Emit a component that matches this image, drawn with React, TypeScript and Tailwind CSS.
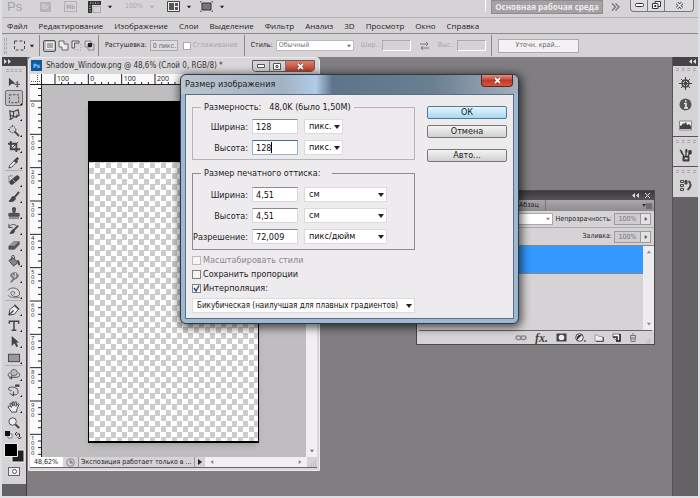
import { useState } from 'react';
import type { ReactNode } from 'react';
import clsx from 'clsx';

const menuItems = [
  'Файл', 'Редактирование', 'Изображение', 'Слои', 'Выделение', 'Фильтр',
  'Анализ', '3D', 'Просмотр', 'Окно', 'Справка',
];

// ── Small shared pieces ──

function Caret({ className }: { className?: string }) {
  return (
    <svg viewBox="0 0 6 4" className={clsx('h-1 w-1.5 shrink-0', className)} fill="currentColor">
      <path d="M0 0h6L3 4z" />
    </svg>
  );
}

function Grip({ className }: { className?: string }) {
  return <div className={clsx('border-y border-dashed border-[#aaa8aa]', className)} />;
}

function Divider() {
  return <div className="w-px self-stretch bg-[#8b898b]" />;
}

// ── Tool icons ──

type Tool = { label: string; icon: ReactNode; flyout?: boolean };

const toolGroups: Tool[][] = [
  [
    { label: 'Перемещение', icon: <><path d="M2 2v9l2.500-2.500L9 8z" fill="#444" stroke="none" /><path d="M11 6v6M8 9h6M10 7l1-1 1 1M10 11l1 1 1-1" /></> },
    { label: 'Прямоугольная область', icon: <rect x="2.500" y="3" width="10" height="8.500" strokeDasharray="2.500 1.500" />, flyout: true },
    { label: 'Лассо', icon: <><path d="M4 12L3 3l3 1 6-2 1 6-4 2" fill="#ccc" strokeWidth="1.300" /><path d="M3 9c2-2 5 0 3 2s-3 0-3 2M7 4v5l3 1 1-3" strokeWidth="1.200" /></>, flyout: true },
    { label: 'Волшебная палочка', icon: <><circle cx="6" cy="6" r="3.500" strokeDasharray="1.500 1" fill="#ccc" /><path d="M6 1v2M1 6h2" /><path d="M8 8l5 5" strokeWidth="2" /></>, flyout: true },
    { label: 'Рамка', icon: <><path d="M4 1v9h10M1 4h9v9" strokeWidth="2" /><path d="M4 10l8-8" /></>, flyout: true },
    { label: 'Пипетка', icon: <><path d="M2 13l1-3 5-5 2 2-5 5z" fill="#eee" /><path d="M8 4l3 3M9 5l3-3" strokeWidth="2.800" /></>, flyout: true },
  ],
  [
    { label: 'Восстанавливающая кисть', icon: <><path d="M5 9l6-5" strokeWidth="5" strokeLinecap="round" /><path d="M6 6l4 4" stroke="#bbb" /><path d="M2 9V2h5" strokeDasharray="1 1" /></>, flyout: true },
    { label: 'Кисть', icon: <><path d="M8 8l5-6" strokeWidth="2" /><path d="M2 12c3-1 2-5 5-5l2 2c0 3-4 4-7 3z" fill="#444" /></>, flyout: true },
    { label: 'Штамп', icon: <path d="M6 2h3v3l-1 3h5v3H2V8h5L6 5zM2 13h11" fill="#555" />, flyout: true },
    { label: 'Архивная кисть', icon: <><path d="M2 6c2-4 6-4 8-2M2 2v4h4" /><path d="M7 9l5-5" strokeWidth="2" /><path d="M3 12c2-1 1-3 4-4l1 2c0 2-3 3-5 2z" fill="#444" /></>, flyout: true },
    { label: 'Ластик', icon: <><path d="M2 9l5-5h6l-5 5z" fill="#999" stroke="#777" /><path d="M2 9h6l5-5v3l-5 5H2z" fill="#555" stroke="#555" /></>, flyout: true },
    { label: 'Заливка', icon: <><path d="M2 7l4-3 6 5-5 4z" fill="#888" /><path d="M5 7V3c0-2 3-2 3 0v3" /><path d="M11 7c2 1 2 3 2 5" strokeWidth="2" /></>, flyout: true },
    { label: 'Палец', icon: <><path d="M4 13l3-4C4 8 3 5 5 4s4-2 6 0 1 4-1 5-3 1-5 4z" fill="#888" stroke="#666" /><path d="M6 5l2 3M9 3v5" stroke="#ddd" /></>, flyout: true },
    { label: 'Губка', icon: <><path d="M1 5c2-4 10-4 12 1s-3 6-6 5-4-5-1-5 3 3 1 3" fill="#ddd" stroke="#555" /><path d="M1 10c3 3 9 3 13 2" stroke="#777" /></>, flyout: true },
  ],
  [
    { label: 'Перо', icon: <><path d="M2 13l1-6 5-4 4 4-4 5z" fill="#eee" /><path d="M2 13l5-5M8 2l5 5" strokeWidth="1.500" /></>, flyout: true },
    { label: 'Текст', icon: <path d="M2.500 5V2.500h10V5M7.500 2.500v9.500M5 12h5" strokeWidth="1.600" />, flyout: true },
    { label: 'Выделение контура', icon: <path d="M5 1v11l3-3 2 4 2-1-2-4h3z" fill="#444" stroke="none" />, flyout: true },
    { label: 'Прямоугольник', icon: <rect x="1.500" y="3.500" width="12" height="8" fill="#999" />, flyout: true },
  ],
  [
    { label: '3D-поворот', icon: <><circle cx="7.500" cy="5" r="3.500" fill="#bbb" stroke="#666" /><path d="M3 5c-3 2-2 5 2 5h5c5 0 4-4 2-5M5 8v4L2 10" /></>, flyout: true },
    { label: '3D-камера', icon: <><path d="M2 4c3-2 10 0 10 4s-3 4-6 3M7 8v5l-4-3M2 4c-1 2 1 4 3 3" /><path d="M9 1h4v1.500H9z" fill="#444" /></>, flyout: true },
    { label: 'Рука', icon: <path d="M5 13L2 9 1 7l2-.500L5 8 3 4l1.500-1L6 6.500V2h1.500v4.500L9 2l1.500.500L9.500 7 12 4l1 .500L11 9l-1 4z" fill="#eee" />, flyout: true },
    { label: 'Масштаб', icon: <><circle cx="6" cy="6" r="4" fill="#eee" /><path d="M9 9l4 4" strokeWidth="2.200" /></> },
  ],
];

function Toolbar() {
  const [active, setActive] = useState('Прямоугольная область');

  return (
    <aside className="flex w-[25px] shrink-0 flex-col border-r border-[#3c3c3c] bg-[#646264]">
      <div className="flex h-[9px] items-center bg-[#464446] pl-0.5">
        <svg viewBox="0 0 8 5" className="h-[5px] w-2" fill="#ddd"><path d="M0 0l3 2.500L0 5zM4 0l3 2.500L4 5z" /></svg>
      </div>
      <div className="flex flex-col items-center bg-[#d6d3d6] pb-2">
        <div className="flex h-2 items-center"><Grip className="h-[3px] w-4" /></div>
        {toolGroups.map((group, i) => (
          <div
            key={i}
            className={clsx(
              'flex flex-col items-center',
              i > 0 && 'border-t border-[#b2b0b2]',
              i === 1 && 'pt-px'
            )}
          >
            {group.map((tool) => (
              <button
                key={tool.label}
                aria-label={tool.label}
                onClick={() => setActive(tool.label)}
                className={clsx(
                  'relative flex h-4 w-[18px] items-center justify-center rounded-xs border',
                  active === tool.label ? 'border-[#6d6d6d] bg-[#c2c0c2]' : 'border-transparent'
                )}
              >
                <svg viewBox="0 0 15 14" className="h-[13px] w-3.5" fill="none" stroke="#444">{tool.icon}</svg>
                {tool.flyout && (
                  <svg viewBox="0 0 3 3" className="absolute right-0 bottom-0 size-[2px]"><path d="M3 0v3H0z" /></svg>
                )}
              </button>
            ))}
          </div>
        ))}
        <div className="mt-px flex w-[18px] items-center justify-between">
          <svg viewBox="0 0 8 8" className="size-2"><path d="M3 3h4v4H3z" fill="#fff" stroke="#777" /><path d="M0 0h5v5H0z" fill="#111" /></svg>
          <svg viewBox="0 0 8 8" className="size-2" fill="none" stroke="#333"><path d="M2 3h2.500v3M2 1L0 3l2 2M2.500 6l2 2 2-2" /></svg>
        </div>
        <svg viewBox="0 0 21 20" className="mt-1 h-5 w-[21px]">
          <path d="M8 7h12v12H8z" fill="#222" stroke="#eee" />
          <path d="M.500.500h13v13H.500z" fill="#000" stroke="#eee" />
        </svg>
        <button aria-label="Быстрая маска" className="mt-1 flex h-[9px] w-3 items-center justify-center border border-[#666] bg-[#eee]">
          <span className="size-[5px] rounded-full border border-[#555] bg-white" />
        </button>
      </div>
    </aside>
  );
}

// ── Top bars ──

function AppBar() {
  return (
    <header className="flex h-[18px] items-center border-b border-[#b3b1b3] pb-1 pl-[5px] text-[7px] text-[#a9a7a9]">
      <span className="w-[33px] font-['Liberation_Sans',sans-serif] text-[13px] leading-[14px] text-[#a3a1a3]">Ps</span>
      <button className="w-[11px] bg-[#b7b5b7] text-center text-[7px] leading-[10px] text-[#e0dee0]">Br</button>
      <button className="ml-[13px] w-[13px] border border-[#b3b1b3] text-center text-[6px] leading-[9px] font-bold">Mb</button>
      <button aria-label="Показать" className="ml-[11px] flex items-center gap-1.5 text-[#222]">
        <svg viewBox="0 0 13 12" className="h-3 w-[13px]">
          <path d="M0 0h13v4H4v8H0z" fill="#333" />
          <path d="M2 2h1M4.500 2h1M7 2h1M9.500 2h1M1.500 5h1M1.500 7.500h1M1.500 10h1" stroke="#eee" />
          <path d="M5 5.500h7.500v6H5z" fill="#d6d3d6" stroke="#aaa" />
        </svg>
        <Caret className="scale-75" />
      </button>
      <button className="ml-3 flex items-center gap-1.5">100%<Caret className="scale-75" /></button>
      <button aria-label="Упорядочить документы" className="ml-3 flex items-center gap-1.5 text-[#222]">
        <svg viewBox="0 0 13 11" className="h-[11px] w-[13px]"><path d="M.500.500h12v10H.500z" fill="#eee" stroke="#444" /><path d="M2 2h5v7H2zM8 2h3v3H8zM8 6h3v3H8z" fill="#555" /></svg>
        <Caret className="scale-75" />
      </button>
      <button aria-label="Режим экрана" className="ml-2 flex items-center gap-1.5 text-[#222]">
        <svg viewBox="0 0 13 11" className="h-[11px] w-[13px]"><path d="M2 2h9v7H2z" fill="#777" stroke="#333" /><path d="M0 2V0h2M11 0h2v2M0 9v2h2M11 11h2V9" fill="none" stroke="#555" /></svg>
        <Caret className="scale-75" />
      </button>
      <div className="ml-auto flex h-[14px] items-start">
        <div className="mr-[5px] h-3 w-px bg-white" />
        <button className="h-[14px] w-28 border border-[#8f8d8f] bg-[#a3a1a3] text-center font-['Open_Sans',sans-serif] text-[8px] leading-[12px] font-bold whitespace-nowrap text-[#eceaec]">
          Основная рабочая среда
        </button>
        <svg viewBox="0 0 9 8" className="mt-[3px] mr-2.5 ml-2 h-2 w-[9px]" fill="none" stroke="#777" strokeWidth="1.300"><path d="M1 .500L4.500 4 1 7.500M4.500.500L8 4 4.500 7.500" /></svg>
        <div className="mr-1 flex h-3 overflow-hidden rounded-b border border-t-0 border-[#77797b] bg-[#dedcde]">
          <button aria-label="Свернуть" className="flex w-[17px] items-center justify-center border-r border-[#77797b]">
            <svg viewBox="0 0 9 4" className="h-1 w-[9px]"><rect x=".500" y=".500" width="8" height="3" rx="1" fill="#fff" stroke="#333" /></svg>
          </button>
          <button aria-label="Восстановить" className="flex w-[17px] items-center justify-center border-r border-[#77797b]">
            <svg viewBox="0 0 9 8" className="h-2 w-[9px]" fill="#fff" stroke="#333"><path d="M3 .500h5.500v5H3z" /><path d="M.500 2.500H6v5H.500z" /><path d="M2.500 4.500H4v1H2.500z" /></svg>
          </button>
          <button aria-label="Закрыть" className="flex w-7 items-center justify-center">
            <svg viewBox="0 0 9 7" className="h-[7px] w-[9px]"><path d="M2 1l5 5M7 1L2 6" stroke="#333" strokeWidth="3" /><path d="M2 1l5 5M7 1L2 6" stroke="#fff" strokeWidth="1.400" /></svg>
          </button>
        </div>
      </div>
    </header>
  );
}

function OptionsBar() {
  return (
    <div className="flex h-6 items-center border-t border-[#8b898b] py-px pl-0.5 text-[7px] text-[#222]">
      <div className="h-4 w-[3px] border-x border-dashed border-[#aaa8aa]" />
      <svg viewBox="0 0 11 11" className="ml-[7px] size-[11px]"><rect x=".500" y="1" width="10" height="9" fill="none" stroke="#444" strokeDasharray="3 2" /></svg>
      <Caret className="mr-1 ml-1 scale-75" />
      <Divider />
      <div className="mx-[3px] flex items-center gap-0.5">
        <button aria-label="Новая область" className="flex h-3 w-[13px] items-center justify-center rounded-xs border border-[#555] bg-[#bbb]">
          <span className="h-[7px] w-2 border border-[#eee] bg-[#aaa]" />
        </button>
        <button aria-label="Добавить к области"><svg viewBox="0 0 11 11" className="size-[11px]"><path d="M1 1h5v3h4v6H4V7H1z" fill="#eee" stroke="#666" /></svg></button>
        <button aria-label="Вычесть из области"><svg viewBox="0 0 11 11" className="size-[11px]" fill="none" stroke="#555"><path d="M1 8V1h7v2H3.500v5z" fill="#eee" /><path d="M4 4h6v6H4z" strokeDasharray="1 2" stroke="#999" /></svg></button>
        <button aria-label="Пересечение"><svg viewBox="0 0 11 11" className="size-[11px]"><path d="M1 1h6v6H1zM4 4h6v6H4z" fill="none" stroke="#888" /><path d="M4 3h4v4H4z" fill="#222" /></svg></button>
      </div>
      <Divider />
      <label htmlFor="feather" className="ml-1.5">Растушевка:</label>
      <input id="feather" defaultValue="0 пикс." className="ml-[3px] h-[11px] w-7 border border-[#aaa] bg-[#dedcde] pl-0.5 text-[7px] text-[#666]" />
      <label className="mr-1.5 ml-[5px] flex items-center gap-0.5 text-[#a9a7a9]">
        <input type="checkbox" disabled className="size-2 appearance-none border border-[#aaa] bg-white" />
        Сглаживание
      </label>
      <Divider />
      <label htmlFor="style" className="ml-1.5">Стиль:</label>
      <div className="relative ml-[3px] w-[78px] text-[#777]">
        <select id="style" className="block h-[11px] w-full appearance-none border border-[#bbb] bg-white pl-0.5 text-[7px] leading-[9px]">
          <option>Обычный</option>
        </select>
        <Caret className="pointer-events-none absolute top-1 right-0.5 scale-75" />
      </div>
      <label htmlFor="opt-w" className="ml-[7px] text-[#a9a7a9]">Шир.:</label>
      <input id="opt-w" disabled className="ml-0.5 h-[11px] w-[29px] border border-[#aaa] border-r-white border-b-white bg-[#d6d3d6]" />
      <svg viewBox="0 0 9 8" className="mx-[9px] h-2 w-[9px]" fill="none" stroke="#777"><path d="M0 2h8M6 0l2 2-2 2M9 6H1M3 4L1 6l2 2" /></svg>
      <label htmlFor="opt-h" className="text-[#a9a7a9]">Выс.:</label>
      <input id="opt-h" disabled className="mr-[5px] ml-0.5 h-[11px] w-[29px] border border-[#aaa] border-r-white border-b-white bg-[#d6d3d6]" />
      <Divider />
      <button className="ml-1.5 h-[14px] w-[81px] border border-[#aaa] bg-[#f3f1f3] text-[7px] leading-none text-[#666]">Уточн. край...</button>
    </div>
  );
}

// ── Document window ──

const hTicks = [-100, 0, 100, 200, 300, 400, 500, 600];
const vTicks = [0, 100, 200, 300, 400, 500, 600, 700, 800, 900, 1000];

function HorizontalRuler() {
  return (
    <svg className="h-[11px] min-w-0 flex-1 bg-[#fafafa]" fill="#222" fontSize="7" fontFamily="Open Sans, sans-serif">
      {hTicks.map((t, i) => {
        const x = 13 + (i * 100) / 3;
        return (
          <g key={t}>
            <path d={`M${x} 0v11M${x + 6.7} 8v3M${x + 13.3} 8v3M${x + 20} 8v3M${x + 26.7} 8v3`} stroke="#222" />
            <text x={x + 2} y="7">{Math.abs(t)}</text>
          </g>
        );
      })}
      <path d="M0 10.500h290" stroke="#222" />
    </svg>
  );
}

function VerticalRuler() {
  return (
    <svg className="h-full w-3 shrink-0 bg-[#fafafa]" fill="#222" fontSize="6" fontFamily="Open Sans, sans-serif">
      <path d="M8 3.500h3M8 10.500h3" stroke="#222" />
      {vTicks.map((t, i) => {
        const y = 16 + (i * 100) / 3;
        return (
          <g key={t}>
            <path d={`M0 ${y}h11M8 ${y + 6.7}h3M8 ${y + 13.3}h3M8 ${y + 20}h3M8 ${y + 26.7}h3`} stroke="#222" />
            {String(t).split('').map((d, n) => (
              <text key={n} x="1" y={y + 6 + n * 5}>{d}</text>
            ))}
          </g>
        );
      })}
      <path d="M11.500 0v400" stroke="#222" />
    </svg>
  );
}

function DocumentWindow() {
  return (
    <section className="absolute top-0 left-[26px] flex h-[414px] w-[292px] flex-col rounded-t border border-[#eceaec] bg-[#d9d7d9] pr-0.5 pb-0.5 pl-px">
      <div className="flex h-4 items-start text-[#333]">
        <span className="mt-0.5 mr-1 ml-px flex h-[11px] w-[11px] items-center justify-center bg-[#0e5a9c] text-[6px] font-bold text-[#8fd3ff]">Ps</span>
        <h1 className="text-[8px] leading-[15px] whitespace-nowrap">Shadow_Window.png @ 48,6% (Слой 0, RGB/8) *</h1>
        <div className="mt-0.5 mr-0.5 ml-auto flex h-3 w-[63px] overflow-hidden rounded-b border border-[#665c5c]">
          <button aria-label="Свернуть" className="flex flex-1 items-center justify-center border-r border-[#777] bg-[#d4d2d4]">
            <svg viewBox="0 0 8 4" className="h-1 w-2"><path d="M.500.500h7v3h-7z" fill="#fff" stroke="#555" /></svg>
          </button>
          <button aria-label="Развернуть" className="flex flex-1 items-center justify-center border-r border-[#777] bg-[#d4d2d4]">
            <svg viewBox="0 0 8 7" className="h-[7px] w-2"><path d="M.500.500h7v6h-7z" fill="#fff" stroke="#555" /><path d="M3 2.500h2v2H3z" fill="none" stroke="#555" /></svg>
          </button>
          <button aria-label="Закрыть документ" className="flex w-7 items-center justify-center bg-linear-to-b from-[#dc8070] to-[#bf3a22]">
            <svg viewBox="0 0 9 7" className="h-[7px] w-[9px]"><path d="M2 1l5 5M7 1L2 6" stroke="#7a3a30" strokeWidth="3" /><path d="M2 1l5 5M7 1L2 6" stroke="#fff" strokeWidth="1.800" /></svg>
          </button>
        </div>
      </div>
      <div className="flex">
        <div className="flex h-[11px] w-3 items-center justify-center border-r border-b border-[#222] bg-[#fafafa]">
          <svg viewBox="0 0 9 9" className="size-[9px]"><path d="M6.500 0v9M0 6.500h9" stroke="#555" strokeDasharray="1 1" /></svg>
        </div>
        <HorizontalRuler />
      </div>
      <div className="flex min-h-0 flex-1">
        <VerticalRuler />
        <div className="min-w-0 flex-1 bg-[#bfbdbf] pt-4 pl-[46px]">
          <div className="h-[342px] w-[171px] border border-b-2 border-black bg-[conic-gradient(#fff_25%,#ccc_0_50%,#fff_0_75%,#ccc_0)] bg-size-[11px_11px] shadow-md">
            <div className="h-[60px] bg-black" />
          </div>
        </div>
        <div className="flex w-[11px] shrink-0 flex-col items-center justify-end bg-[#f1eff1] pb-1 text-[#777]"><Caret className="scale-75" /></div>
      </div>
      <footer className="flex h-[11px] shrink-0 items-center border-b border-[#666] bg-[#d6d3d6] text-[7px] leading-none text-[#222]">
        <span className="flex h-full w-[33px] items-center bg-white pl-1">48,62%</span>
        <svg viewBox="0 0 9 9" className="mx-[3px] size-[9px]" fill="none" stroke="#888"><circle cx="4.500" cy="4.500" r="3.800" /><path d="M4 2l3 3H4z" fill="#888" /></svg>
        <span className="flex h-full flex-1 items-center border-x border-[#999] pl-0.5 whitespace-nowrap">Экспозиция работает только в ...</span>
        <button aria-label="Сведения" className="flex w-[9px] justify-center"><Caret className="-rotate-90" /></button>
        <div className="ml-px flex h-full w-[102px] items-center justify-between bg-[#f1eff1] px-1 text-[#888]">
          <Caret className="scale-75 rotate-90" /><Caret className="scale-75 -rotate-90" />
        </div>
        <svg viewBox="0 0 10 10" className="size-2.5" stroke="#aaa" strokeDasharray="1 1"><path d="M2 9h7M4 7h5M6 5h3M8 3h1" /></svg>
      </footer>
    </section>
  );
}

// ── Layers panel ──

function LayersPanel() {
  return (
    <section className="absolute top-[133px] left-[414px] flex h-[155px] w-[239px] flex-col border border-[#4a484a] bg-[#d6d3d6] text-[7px] text-[#222]">
      <div className="flex h-[9px] shrink-0 items-center justify-end gap-1.5 bg-linear-to-b from-[#3c3a3c] to-[#555355] pr-1 text-[#ddd]">
        <svg viewBox="0 0 7 5" className="h-[5px] w-[7px]" fill="currentColor"><path d="M3 0v5L0 2.500zM7 0v5L4 2.500z" /></svg>
        <svg viewBox="0 0 5 5" className="size-[5px]" stroke="currentColor"><path d="M0 0l5 5M5 0L0 5" /></svg>
      </div>
      <div className="flex h-[11px] shrink-0 items-center bg-linear-to-b from-[#a9a7a9] to-[#8d8b8d] pr-0.5 pl-[102px]">
        <button className="h-full border-r border-[#777] pr-1.5 leading-none">Абзац</button>
        <svg viewBox="0 0 10 6" className="ml-auto h-1.5 w-2.5"><path d="M0 1h4L2 4z" fill="#333" /><path d="M4 1h6M4 3h6M4 5h6" stroke="#333" strokeWidth=".8" /></svg>
      </div>
      <div className="flex h-[17px] shrink-0 items-center justify-end gap-0.5 border-b border-[#aaa] pr-[3px]">
        <div className="relative mr-px w-[120px] text-[#888]">
          <select aria-label="Режим наложения" className="block h-3 w-full appearance-none border border-[#aaa] bg-white"><option></option></select>
          <Caret className="pointer-events-none absolute top-1 right-0.5 scale-75" />
        </div>
        <label htmlFor="opacity" className="whitespace-nowrap">Непрозрачность:</label>
        <PercentField id="opacity" />
      </div>
      <div className="flex h-[18px] shrink-0 items-center justify-end gap-0.5 border-b border-[#888] pr-[3px]">
        <label htmlFor="fill">Заливка:</label>
        <PercentField id="fill" />
      </div>
      <div className="flex flex-1">
        <div className="flex-1"><div className="h-7 border-b border-[#888] bg-[#3399ff]" /></div>
        <div className="flex w-[11px] flex-col items-center justify-between bg-[#eeecee] py-1 text-[#888]">
          <Caret className="scale-75 rotate-180" /><Caret className="scale-75" />
        </div>
      </div>
      <footer className="mx-0.5 flex h-3.5 shrink-0 items-center justify-end gap-2 border-t border-[#666] pl-24 text-[#444]">
        <button aria-label="Связать слои"><svg viewBox="0 0 12 7" className="h-[7px] w-3" fill="none" stroke="#888" strokeWidth="1.500"><rect x="1" y="2" width="5" height="3.500" rx="1.700" /><rect x="6" y="2" width="5" height="3.500" rx="1.700" /></svg></button>
        <button className="font-['Liberation_Serif',serif] text-[12px] leading-none font-bold italic">fx.</button>
        <button aria-label="Добавить маску"><svg viewBox="0 0 11 9" className="h-[9px] w-[11px]"><path d="M.500.500h10v8H.500z" fill="#444" /><circle cx="5.500" cy="4.500" r="2.800" fill="#eee" /></svg></button>
        <button aria-label="Корректирующий слой"><svg viewBox="0 0 11 9" className="h-[9px] w-[11px]"><circle cx="4.500" cy="4.500" r="3.800" fill="#eee" stroke="#444" /><path d="M2 7A3.800 3.800 0 0 1 7 2z" fill="#333" /><path d="M9 7.500h2v1H9z" fill="#222" /></svg></button>
        <button aria-label="Новая группа"><svg viewBox="0 0 10 8" className="h-2 w-2.5"><path d="M1 1h3l1 1.500h3.500V7H1z" fill="#eee" stroke="#999" /><path d="M2 7.500h7.500V3" fill="none" stroke="#555" /></svg></button>
        <button aria-label="Новый слой"><svg viewBox="0 0 9 9" className="size-[9px]"><path d="M1 1h7v7H5L1 4z" fill="#fff" stroke="#777" /><path d="M1 4h4v4M8 1v7H4" fill="none" stroke="#222" strokeWidth="1.500" /></svg></button>
        <button aria-label="Удалить слой"><svg viewBox="0 0 8 9" className="h-[9px] w-2" fill="none" stroke="#777"><path d="M1 2.500h6M3 1h2M1.500 3l.500 5.500h4L6.500 3M3 4v3M5 4v3" /></svg></button>
        <svg viewBox="0 0 8 8" className="size-2 self-end" stroke="#999" strokeDasharray="1 1"><path d="M1 7h6M3 5h4M5 3h2" /></svg>
      </footer>
    </section>
  );
}

function PercentField({ id }: { id: string }) {
  return (
    <div className="flex h-3 shrink-0 border border-[#999]">
      <input id={id} defaultValue="100%" className="w-[25px] bg-[#cfcdcf] text-center text-[7px] leading-none text-[#777]" />
      <button aria-label="Изменить" className="flex w-[10px] items-center justify-center border-l border-[#999] bg-[#e4e2e4] text-[#555]">
        <Caret className="-rotate-90 scale-75" />
      </button>
    </div>
  );
}

// ── Right dock ──

function Dock() {
  return (
    <aside className="ml-auto flex w-[26px] shrink-0 flex-col border-l border-[#555] bg-[#646264]">
      <div className="flex h-[9px] items-center justify-end bg-[#464446] pr-0.5">
        <svg viewBox="0 0 7 5" className="h-[5px] w-[7px]" fill="#ddd"><path d="M3 0v5L0 2.500zM7 0v5L4 2.500z" /></svg>
      </div>
      <div className="flex flex-col items-center bg-[#d6d3d6] pt-0.5 pb-1">
        <Grip className="mb-1.5 h-[3px] w-5" />
        <div className="flex flex-col gap-2">
          <button aria-label="Навигатор" className="flex">
            <svg viewBox="0 0 13 13" className="size-[13px]" fill="none" stroke="#444"><circle cx="6.500" cy="6.500" r="3.500" strokeWidth="1.400" /><path d="M6.500 0v13M0 6.500h13M2 2l9 9M11 2l-9 9" /></svg>
          </button>
          <button aria-label="Инфо" className="flex">
            <svg viewBox="0 0 13 13" className="size-[13px]"><circle cx="6.500" cy="6.500" r="6" fill="#555" /><path d="M5 5.500h2V10M5 10h4M6 3h1.500" stroke="#eee" strokeWidth="1.500" fill="none" /></svg>
          </button>
          <button aria-label="Гистограмма" className="flex">
            <svg viewBox="0 0 13 13" className="size-[13px]"><path d="M.500 2h12v9H.500z" fill="#eee" stroke="#888" /><path d="M1 10V7l2-1 1-2 1 1 2-2 1 3 2-1 2 2v3z" fill="#444" /></svg>
          </button>
        </div>
      </div>
      <div className="flex h-[30px] flex-col items-center gap-1.5 border-t border-[#555] bg-[#d6d3d6] pt-[3px]">
        <Grip className="h-[3px] w-5" />
        <button aria-label="Кисти" className="flex">
          <svg viewBox="0 0 13 13" className="size-[13px]" stroke="#333" fill="#333"><path d="M4 7.500h6v4.500H4z" fill="#555" /><path d="M5 7L2 3M7 7V2M9 7l2-3" strokeWidth="1.300" /><path d="M1 1l2.500 2.500M6.300 1h1.400v2.500M10 2h2v2.500h-2z" strokeWidth="1.300" /><path d="M6 9.500h2.500" stroke="#ddd" strokeWidth="1.500" /></svg>
        </button>
      </div>
      <div className="flex h-[31px] flex-col items-center gap-1.5 border-t border-[#555] bg-[#d6d3d6] pt-[3px]">
        <Grip className="h-[3px] w-5" />
        <button aria-label="Источник клонов" className="flex">
          <svg viewBox="0 0 13 13" className="size-[13px]" fill="none" stroke="#444"><path d="M1.500 1.500h3v2h-3zM1.500 5.500h3v2h-3zM1.500 9.500h3v2h-3z" /><path d="M6 1.500h2v3.500H6z" fill="#444" /><path d="M9.500 2c3 2 3 6-1 9" strokeWidth="2" /></svg>
        </button>
      </div>
    </aside>
  );
}

// ── Image size dialog ──

function UnitSelect({ label, options, className }: { label: string; options: string[]; className?: string }) {
  return (
    <div className={clsx('relative', className)}>
      <select aria-label={label} className="block h-[15px] w-full appearance-none border border-[#dcdadc] bg-white pl-1 leading-[13px] text-[#111]">
        {options.map((o) => <option key={o}>{o}</option>)}
      </select>
      <Caret className="pointer-events-none absolute top-1.5 right-[3px]" />
    </div>
  );
}

function FieldRow({ id, label, value, options, wide, focused }: {
  id: string; label: string; value: string; options: string[]; wide?: boolean; focused?: boolean;
}) {
  return (
    <div className="flex items-center">
      <label htmlFor={id} className="mr-1 w-[55px] text-right">{label}</label>
      <span className="relative flex">
        <input
          id={id}
          defaultValue={value}
          className={clsx(
            'h-[15px] w-[46px] border bg-white pl-[3px] text-[9px] leading-none text-[#111] outline-none',
            focused ? 'border-[#8fb4d0] border-t-[#3d6f96]' : 'border-[#d8d8d8] border-t-[#8c8c8c]'
          )}
        />
        {focused && <span className="pointer-events-none absolute top-0.5 left-[19px] h-[11px] w-px bg-black" />}
      </span>
      <UnitSelect label={`${label} единицы`} options={options} className={clsx('ml-1.5', wide ? 'w-[83px]' : 'w-[39px]')} />
    </div>
  );
}

function CheckRow({ label, checked, disabled }: { label: string; checked?: boolean; disabled?: boolean }) {
  return (
    <label className={clsx('flex h-3.5 items-center gap-0.5', disabled && 'text-[#8b898b]')}>
      <span className="relative flex">
        <input
          type="checkbox"
          defaultChecked={checked}
          disabled={disabled}
          className="peer size-[9px] appearance-none border border-[#7d7f81] bg-[#f4f4f4] disabled:border-[#bbb]"
        />
        <svg viewBox="0 0 9 9" className="pointer-events-none absolute inset-0 hidden size-[9px] peer-checked:block"><path d="M2 4l2 3 3-5.500" fill="none" stroke="#2f4f9a" strokeWidth="1.500" /></svg>
      </span>
      {label}
    </label>
  );
}

function DialogButton({ children, primary }: { children: ReactNode; primary?: boolean }) {
  return (
    <button
      className={clsx(
        'h-[13px] w-full rounded-xs border text-center leading-[11px]',
        primary
          ? 'border-[#4d7c98] bg-linear-to-b from-[#e4f4fc] to-[#a5d8f0]'
          : 'border-[#777] bg-linear-to-b from-[#f4f4f4] to-[#d0d0d0]'
      )}
    >
      {children}
    </button>
  );
}

function ImageSizeDialog() {
  return (
    <section
      role="dialog"
      aria-label="Размер изображения"
      className="absolute top-[17px] left-[178px] w-[339px] rounded-md border border-[#2c3a48] bg-[#9fb8d0] px-1 pb-1 text-[9px] leading-3 text-[#222] shadow-[1px_2px_8px_2px_rgba(0,0,0,0.6)]"
    >
      <div className="-mx-1 flex h-[19px] items-start justify-between rounded-t-md bg-[linear-gradient(90deg,#bcc5ce,#a3b2c2_30%,#b0cce6_40%,#5f7489_45%,#6b7f93_75%,#a3b0bd)] pr-[5px] pl-1">
        <h2 className="pt-[3px]">Размер изображения</h2>
        <button aria-label="Закрыть" className="flex h-3 w-8 items-center justify-center rounded-b border border-t-0 border-[#5a2420] bg-linear-to-b from-[#e09080] via-[#c03a28] to-[#cc5a40]">
          <svg viewBox="0 0 9 7" className="h-[7px] w-[9px]"><path d="M2 1l5 5M7 1L2 6" stroke="#6a2a24" strokeWidth="3" /><path d="M2 1l5 5M7 1L2 6" stroke="#fff" strokeWidth="1.800" /></svg>
        </button>
      </div>
      <form className="flex items-start gap-3 border border-[#56708a] bg-[#edebed] px-[6px] pt-1.5 pb-[5px]" onSubmit={(e) => e.preventDefault()}>
        <div className="w-[223px]">
          <fieldset className="border border-[#b5b3b5] pt-1.5 pb-1">
            <legend className="ml-2 flex gap-2 px-[3px]"><span>Размерность:</span><span>48,0K (было 1,50M)</span></legend>
            <div className="flex flex-col gap-1.5">
              <FieldRow id="px-w" label="Ширина:" value="128" options={['пикс.', '%']} />
              <FieldRow id="px-h" label="Высота:" value="128" options={['пикс.', '%']} focused />
            </div>
          </fieldset>
          <fieldset className="mt-[7px] border border-[#8f8d8f] pt-2 pb-[5px]">
            <legend className="ml-2 pr-3 pl-[3px]">Размер печатного оттиска:</legend>
            <div className="flex flex-col gap-1.5">
              <FieldRow id="doc-w" label="Ширина:" value="4,51" options={['см', 'мм']} wide />
              <FieldRow id="doc-h" label="Высота:" value="4,51" options={['см', 'мм']} wide />
              <FieldRow id="doc-res" label="Разрешение:" value="72,009" options={['пикс/дюйм', 'пикс/см']} wide />
            </div>
          </fieldset>
          <div className="mt-[3px] mb-[3px]">
            <CheckRow label="Масштабировать стили" disabled />
            <CheckRow label="Сохранить пропорции" />
            <CheckRow label="Интерполяция:" checked />
          </div>
          <UnitSelect
            label="Метод интерполяции"
            options={['Бикубическая (наилучшая для плавных градиентов)', 'Билинейная']}
            className="text-[8px]"
          />
        </div>
        <div className="flex flex-1 flex-col gap-1.5 pt-[5px]">
          <DialogButton primary>ОК</DialogButton>
          <DialogButton>Отмена</DialogButton>
          <div className="mt-[5px]"><DialogButton>Авто...</DialogButton></div>
        </div>
      </form>
    </section>
  );
}

export default function App() {
  return (
    <div className="flex min-h-screen flex-col border-x-2 border-b-2 border-[#dcdfe4] bg-[#d6d3d6] font-['DejaVu_Sans_Condensed','Open_Sans',sans-serif]">
      <AppBar />
      <nav className="flex h-[15px] items-center gap-[11px] pl-[5px] font-['Open_Sans',sans-serif] text-[8px] text-[#222]">
        {menuItems.map((item) => (
          <button key={item} className="whitespace-nowrap">{item}</button>
        ))}
      </nav>
      <OptionsBar />
      <main className="relative flex flex-1 bg-[#807e80]">
        <Toolbar />
        <Dock />
        <DocumentWindow />
        <LayersPanel />
        <ImageSizeDialog />
      </main>
    </div>
  );
}
